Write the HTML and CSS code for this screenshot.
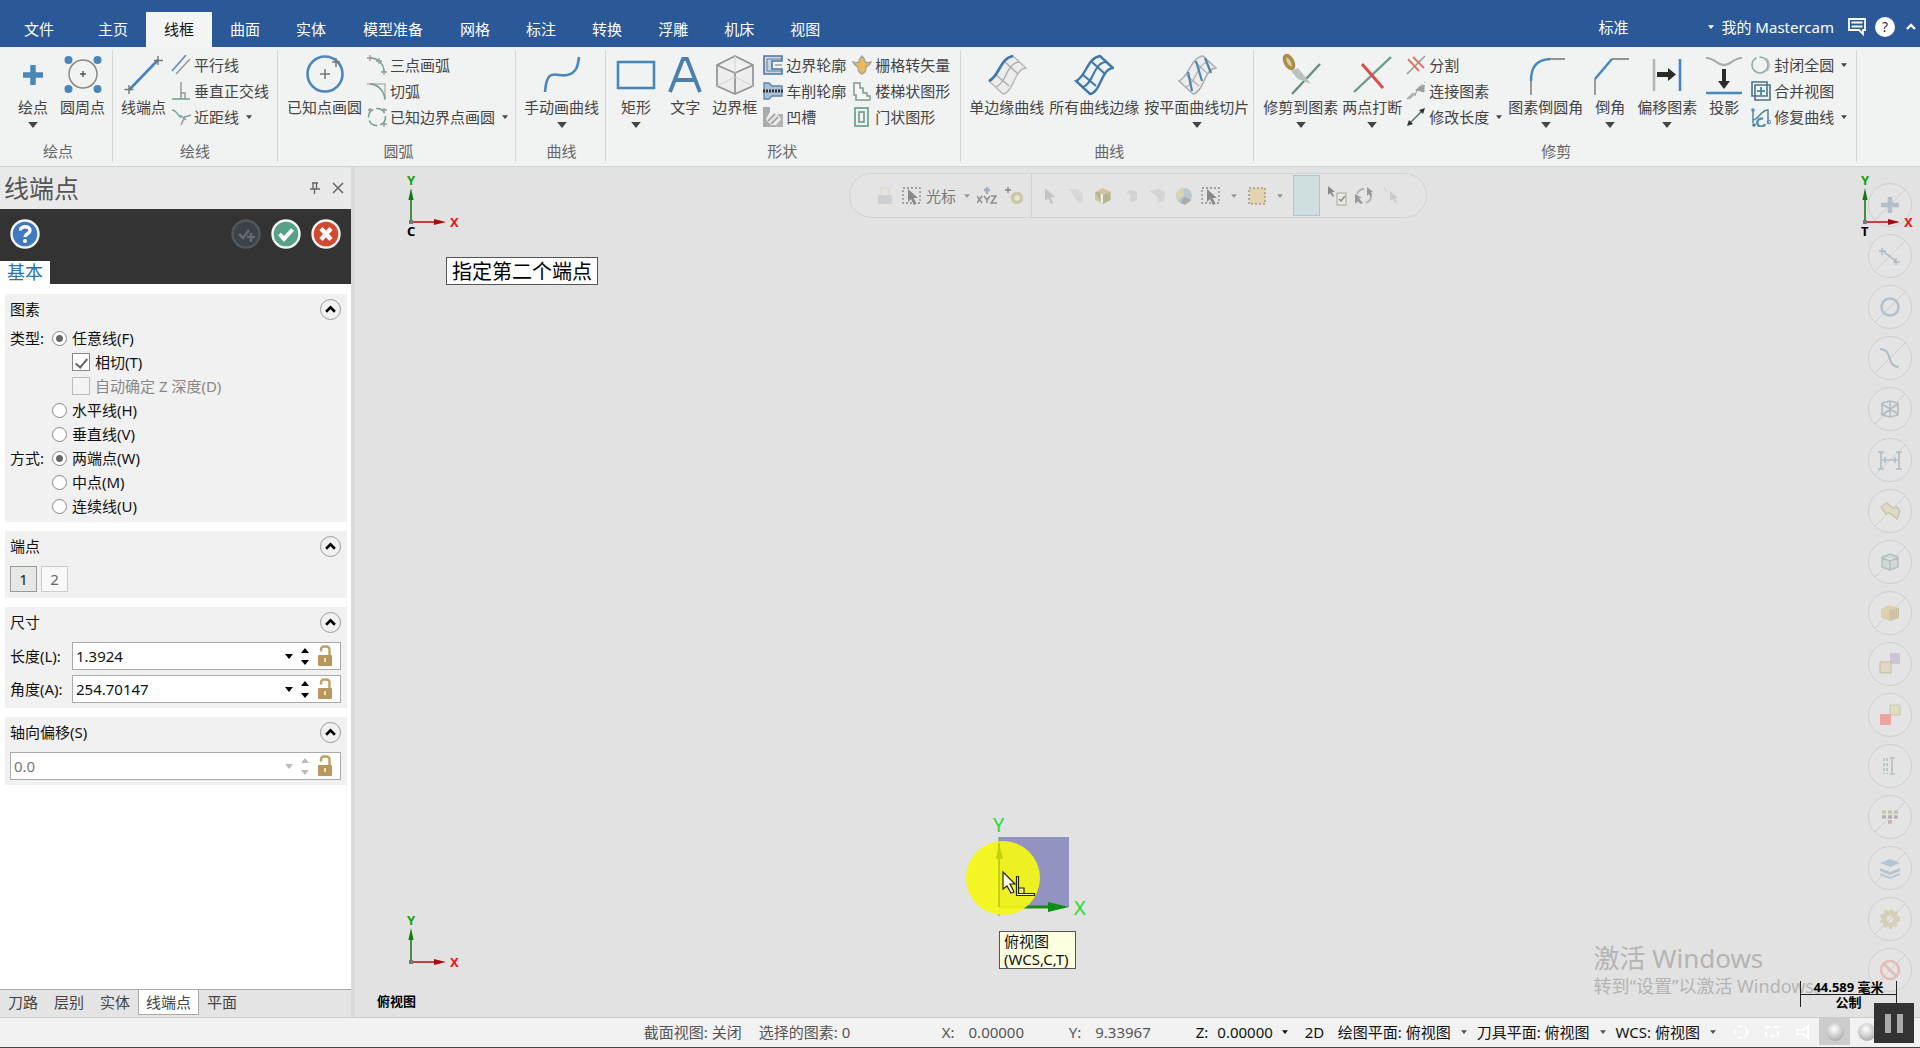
FILE: index.html
```html
<!DOCTYPE html>
<html lang="zh-CN">
<head>
<meta charset="utf-8">
<title>Mastercam</title>
<link rel="stylesheet" href="styles.css">
</head>
<body>
<svg class="defs" aria-hidden="true">
  <symbol id="down" viewBox="0 0 8 5"><path d="M0 0h8L4 5z" fill="currentColor"/></symbol>
  <symbol id="up" viewBox="0 0 8 5"><path d="M0 5h8L4 0z" fill="currentColor"/></symbol>
  <symbol id="chev" viewBox="0 0 10 8"><path d="M1 6l4-4 4 4" fill="none" stroke="currentColor" stroke-width="2.4"/></symbol>
  <symbol id="lock" viewBox="0 0 16 22"><path d="M4 6.500V4.500a3 3 0 0 1 3-3h2.500a3 3 0 0 1 3 3V10" fill="none" stroke="#bf9f61" stroke-width="2.400"/><rect x="1" y="10" width="14" height="11" rx="1" fill="#b8985a"/><path d="M8 13v4" stroke="#f3e2b8" stroke-width="2"/></symbol>
  <symbol id="boxcur" viewBox="0 0 20 20"><rect x="1" y="2" width="17" height="15" fill="none" stroke="#888" stroke-width="1.300" stroke-dasharray="2 2"/><path d="M6 3v13l3-3 3 6 2.500-1.200-3-5.800H16z" fill="#888"/></symbol>
  <symbol id="gnomon" viewBox="0 0 60 60"><path d="M11 50V24" stroke="#1c7a1c" stroke-width="1.600"/><path d="M11 15l-2.600 12h5.200z" fill="#127a12"/><path d="M11 49h24" stroke="#c01818" stroke-width="1.600"/><path d="M46 49l-12-3v6z" fill="#a80c0c"/><rect x="9" y="47" width="4" height="4" fill="#777"/></symbol>
</svg>

<header class="titlebar">
  <nav class="tabs">
    <button class="tab file">文件</button><button class="tab">主页</button><button class="tab on">线框</button><button class="tab">曲面</button><button class="tab">实体</button><button class="tab wide">模型准备</button><button class="tab">网格</button><button class="tab">标注</button><button class="tab">转换</button><button class="tab">浮雕</button><button class="tab">机床</button><button class="tab">视图</button>
  </nav>
  <div class="account">
    <button class="mode"><span>标准</span><svg class="tiny"><use href="#down"/></svg></button>
    <a class="my" href="#">我的 Mastercam</a>
    <button aria-label="消息"><svg width="18" height="20" viewBox="0 0 18 20"><path d="M1 2h16v11h-2v4l-4-4H1z" fill="none" stroke="#fff" stroke-width="1.800"/><path d="M3.500 5.500h11M3.500 9.500h11" stroke="#fff" stroke-width="1.800"/></svg></button>
    <button class="q" aria-label="帮助">?</button>
    <button aria-label="折叠功能区"><svg width="10" height="8"><use href="#chev"/></svg></button>
  </div>
</header>

<section class="ribbon">
  <div class="group">
    <div class="tools">
      <button class="big short"><svg viewBox="0 0 40 44"><path d="M20 12v20M10 22h20" stroke="#4a86b8" stroke-width="5.500"/></svg>绘点<svg class="more"><use href="#down"/></svg></button>
      <button class="big"><svg viewBox="0 0 40 44"><circle cx="20" cy="21" r="14" fill="none" stroke="#8a8a84" stroke-width="1.500"/><g fill="#4a86b8"><circle cx="5.500" cy="7" r="4"/><circle cx="34.500" cy="7" r="4"/><circle cx="5.500" cy="36" r="4"/><circle cx="34.500" cy="36" r="4"/></g><path d="M20 18v6M17 21h6" stroke="#555" stroke-width="1.400"/></svg>圆周点</button>
    </div>
    <h2>绘点</h2>
  </div>
  <div class="group g-line">
    <div class="tools">
      <button class="big"><svg viewBox="0 0 40 44"><path d="M5 37L34 7" stroke="#4584bd" stroke-width="2.600"/><path d="M5 32v9M0.500 36.500h9M34 3v9M30 7.500h9" stroke="#777" stroke-width="1.400"/></svg>线端点</button>
      <div class="col">
        <button><svg viewBox="0 0 20 20"><path d="M1 16L15 0" stroke="#5b8fc0" stroke-width="1.600"/><path d="M5 19L19 4" stroke="#999" stroke-width="1.600"/></svg>平行线</button>
        <button><svg viewBox="0 0 20 20"><path d="M10 1v17M10 12h4v6" stroke="#999" stroke-width="1.500" fill="none"/><path d="M1 18h18" stroke="#6aa08e" stroke-width="1.500"/></svg>垂直正交线</button>
        <button><svg viewBox="0 0 20 20"><path d="M1 3c4 0 6 5 9 8" stroke="#74a898" stroke-width="1.500" fill="none"/><path d="M10 18L14 9M14 10l6-2M9 8l6 5" stroke="#8aa0ac" stroke-width="1.600" fill="none"/></svg>近距线<svg class="tiny"><use href="#down"/></svg></button>
      </div>
    </div>
    <h2>绘线</h2>
  </div>
  <div class="group g-arc">
    <div class="tools">
      <button class="big"><svg viewBox="0 0 40 44"><circle cx="20" cy="21" r="17.500" fill="none" stroke="#4a86bd" stroke-width="2.600"/><path d="M20 16v10M15 21h10M31 5v9M27 9h8" stroke="#777" stroke-width="1.500"/></svg>已知点画圆</button>
      <div class="col">
        <button><svg viewBox="0 0 20 20"><path d="M3 3c8 0 14 6 14 14" stroke="#6aa08e" stroke-width="1.300" fill="none"/><path d="M3 0v6M0 3h6M12 3v6M9 6h6M17 14v6M14 17h6" stroke="#999" stroke-width="1.300"/></svg>三点画弧</button>
        <button><svg viewBox="0 0 20 20"><path d="M0 3h18v16" stroke="#b5b5b5" stroke-width="1.400" fill="none"/><path d="M3 3c8 0 14 7 15 15" stroke="#7da398" stroke-width="1.800" fill="none"/></svg>切弧</button>
        <button><svg viewBox="0 0 20 20"><circle cx="10" cy="10" r="8.500" fill="none" stroke="#6aa08e" stroke-width="1.500" stroke-dasharray="10 3"/><path d="M3 1v5M1 3h5M17 1v5M14 3h6M17 15v5M14 17h6" stroke="#999" stroke-width="1.400"/></svg>已知边界点画圆<svg class="tiny"><use href="#down"/></svg></button>
      </div>
    </div>
    <h2>圆弧</h2>
  </div>
  <div class="group g-curve">
    <div class="tools">
      <button class="big"><svg viewBox="0 0 40 44"><path d="M3 39C5 12 16 25 25 22C35 20 36 12 37 4" stroke="#4a86bd" stroke-width="2.600" fill="none"/></svg>手动画曲线<svg class="more"><use href="#down"/></svg></button>
    </div>
    <h2>曲线</h2>
  </div>
  <div class="group g-shape">
    <div class="tools">
      <button class="big short"><svg viewBox="0 0 40 44"><rect x="2" y="9" width="36" height="26" fill="none" stroke="#4a86b4" stroke-width="2.600"/></svg>矩形<svg class="more"><use href="#down"/></svg></button>
      <button class="big short"><svg viewBox="0 0 40 44"><path d="M5 39L18 6h4l13 33M10 27h20" fill="none" stroke="#4a7fae" stroke-width="3.800"/></svg>文字</button>
      <button class="big"><svg viewBox="0 0 40 44"><path d="M20 3l18 9v21L20 41 2 33V12zM2 12l18 8 18-8M20 20v21" fill="#ededed" stroke="#929292" stroke-width="1.700" stroke-linejoin="round"/><path d="M2 33l18-9 18 9M20 3v17" fill="none" stroke="#d0d0d0"/></svg>边界框</button>
      <div class="col">
        <button><svg viewBox="0 0 20 20"><path d="M1 1h18v5H9v8h10v5H1z" fill="#c6d6e6" stroke="#4a78a4" stroke-width="1.600"/><path d="M19 10H12M4 4h15M4 4v12h15" stroke="#777" fill="none"/></svg>边界轮廓</button>
        <button><svg viewBox="0 0 20 20"><path d="M1 2h5l3 3h10v10H9l-3 3H1z" fill="#a9c0d5" stroke="#5a86ae" stroke-width="1.300"/><path d="M0 10h20" stroke="#333" stroke-width="3" stroke-dasharray="2 1"/></svg>车削轮廓</button>
        <button><svg viewBox="0 0 20 20"><path d="M0 0h7v5L3 12l5 6h12v2H0z" fill="#aaa"/><path d="M14 7h6v13h-9l7-8z" fill="#b4b4b4"/><path d="M3 13l8-8 6 6-8 8z" fill="#e4e4e4"/><path d="M5 14l7-7M8 17l7-7" stroke="#999" stroke-width="1.500"/></svg>凹槽</button>
      </div>
      <div class="col">
        <button><svg viewBox="0 0 20 20"><path d="M10 1c1 1 3 3 3 6 2 1 3 1 6 0-1 3-3 4-5 5 0 4-1 6-4 7-3-1-4-3-4-7-2-1-4-2-5-5 3 1 4 1 6 0 0-3 2-5 3-6z" fill="#ebb95a" stroke="#a3a49c" stroke-width="1.400"/></svg>栅格转矢量</button>
        <button><svg viewBox="0 0 20 20"><path d="M2 2h6v5h3v5h4v3h3v4H4v-5H2z" fill="#f6f6f6" stroke="#7d9990" stroke-width="1.500"/></svg>楼梯状图形</button>
        <button><svg viewBox="0 0 20 20"><rect x="3" y="1" width="13" height="18" fill="none" stroke="#6d9e8c" stroke-width="1.700"/><rect x="7" y="5" width="5" height="10" fill="none" stroke="#6d9e8c" stroke-width="1.700"/></svg>门状图形</button>
      </div>
    </div>
    <h2>形状</h2>
  </div>
  <div class="group g-edge">
    <div class="tools">
      <button class="big"><svg viewBox="0 0 40 44"><path d="M2 28C12 24 13 5 26 3L39 15C27 16 27 39 16 41z" fill="#ececec" stroke="#b8b8b8" stroke-width="1.500"/><path d="M9 34C20 30 19 10 32 9M8 21l14 12M18 9l13 12" fill="none" stroke="#aaa" stroke-width="1.300"/><path d="M2 28C12 24 13 5 26 3" fill="none" stroke="#3f77ad" stroke-width="2.600"/></svg>单边缘曲线</button>
      <button class="big"><svg viewBox="0 0 40 44"><path d="M2 28C12 24 13 5 26 3L39 15C27 16 27 39 16 41z" fill="#edf2f5" stroke="#3f77a8" stroke-width="2.400"/><path d="M9 34C20 30 19 10 32 9M8 21l14 12M18 9l13 12" fill="none" stroke="#3f77a8" stroke-width="2"/></svg>所有曲线边缘</button>
      <button class="big"><svg viewBox="0 0 40 44"><path d="M2 28C12 24 13 5 26 3L39 15C27 16 27 39 16 41z" fill="#ececec" stroke="#aaa" stroke-width="1.500"/><path d="M9 34C20 30 19 10 32 9M8 21l14 12M18 9l13 12" fill="none" stroke="#b0b0b0" stroke-width="1.200"/><path d="M15 38L11 19M25 28L19 8M34 20L28 5" stroke="#4a86ae" stroke-width="2.200"/></svg>按平面曲线切片<svg class="more"><use href="#down"/></svg></button>
    </div>
    <h2>曲线</h2>
  </div>
  <div class="group g-trim">
    <div class="tools">
      <button class="big"><svg viewBox="0 0 40 44"><path d="M11 41L39 11" stroke="#659079" stroke-width="2.400"/><ellipse cx="8" cy="9" rx="3.500" ry="7" transform="rotate(-28 8 9)" fill="#d9cfae" stroke="#a98d48" stroke-width="3.600"/><path d="M10 18l7-3 13 16-13-5z" fill="#b9c2be"/></svg>修剪到图素<svg class="more"><use href="#down"/></svg></button>
      <button class="big"><svg viewBox="0 0 40 44"><path d="M2 39L39 4" stroke="#699c86" stroke-width="2.400"/><path d="M10 11l21 24" stroke="#dd4c49" stroke-width="3"/></svg>两点打断<svg class="more"><use href="#down"/></svg></button>
      <div class="col">
        <button><svg viewBox="0 0 20 20"><path d="M1 19L19 1" stroke="#8d9994" stroke-width="1.400"/><path d="M2 4l11 12M7 2l11 11" stroke="#dc7668" stroke-width="1.900"/></svg>分割</button>
        <button><svg viewBox="0 0 20 20"><path d="M1 18L19 1M3 18L19 4" stroke="#a8aaa9" stroke-width="1.300" stroke-dasharray="9 3"/><path d="M18 4v7l-7-2zM9 15l2-6" fill="#9a9f9c" stroke="#9a9f9c"/></svg>连接图素</button>
        <button><svg viewBox="0 0 20 20"><path d="M3 17L17 3" stroke="#477f70" stroke-width="1.600"/><path d="M19 1l-6 2 4 4zM1 19l2-6 4 4z" fill="#333"/></svg>修改长度<svg class="tiny"><use href="#down"/></svg></button>
      </div>
      <button class="big"><svg viewBox="0 0 40 44"><path d="M5 42V28M22 6h17" stroke="#929292" stroke-width="1.800"/><path d="M5 28C5 14 10 7 24 6" fill="none" stroke="#4686be" stroke-width="2.400"/></svg>图素倒圆角<svg class="more"><use href="#down"/></svg></button>
      <button class="big short"><svg viewBox="0 0 40 44"><path d="M5 42V26M22 6h17" stroke="#929292" stroke-width="1.800"/><path d="M5 26L22 6" stroke="#4686be" stroke-width="2.400"/></svg>倒角<svg class="more"><use href="#down"/></svg></button>
      <button class="big"><svg viewBox="0 0 40 44"><path d="M7 6v32" stroke="#b5b5b5" stroke-width="2.600"/><path d="M33 6v32" stroke="#4686be" stroke-width="2.600"/><path d="M10 19h11v-4l8 6.500-8 6.500v-4H10z" fill="#2b2b2b"/></svg>偏移图素<svg class="more"><use href="#down"/></svg></button>
      <button class="big short"><svg viewBox="0 0 40 44"><path d="M2 5c9 0 11 7 18 7s9-7 18-7" fill="none" stroke="#aaa" stroke-width="2"/><path d="M18 16h4v12h4l-6 8-6-8h4z" fill="#2b2b2b"/><path d="M2 40h36" stroke="#4a88bd" stroke-width="2.600"/></svg>投影</button>
      <div class="col">
        <button><svg viewBox="0 0 20 20"><circle cx="9" cy="10" r="8" fill="none" stroke="#8cafa3" stroke-width="1.600" stroke-dasharray="34 3"/><path d="M15 3c4 4 4 10 1 13" fill="none" stroke="#b5b5b5" stroke-width="1.500"/></svg>封闭全圆<svg class="tiny"><use href="#down"/></svg></button>
        <button><svg viewBox="0 0 20 20"><path d="M1 1h15v14H1zM4 4h15v15H4z" fill="none" stroke="#4c7484" stroke-width="1.600"/><path d="M10 6v8M6 10h8" stroke="#4b90b8" stroke-width="2"/></svg>合并视图</button>
        <button><svg viewBox="0 0 20 20"><path d="M2 2v14M2 13C8 12 10 3 17 3v14" fill="none" stroke="#4d8896" stroke-width="1.500"/><circle cx="2" cy="3" r="1.800" fill="#4b90b8"/><circle cx="18" cy="15" r="1.800" fill="none" stroke="#4b90b8"/><path d="M12 12a4 4 0 1 0 2 5" fill="none" stroke="#5593b3" stroke-width="2.500"/><circle cx="3" cy="18" r="1.800" fill="#3d7c9c"/></svg>修复曲线<svg class="tiny"><use href="#down"/></svg></button>
      </div>
    </div>
    <h2>修剪</h2>
  </div>
</section>

<main class="work">
  <aside class="panel">
    <div class="head">
      <h1>线端点</h1>
      <button aria-label="固定"><svg width="12" height="12" viewBox="0 0 12 12"><path d="M3 1h6M4 1v6M7.500 1v6M1 7h10M5.500 7v5" stroke="#666" stroke-width="1.400"/></svg></button>
      <button aria-label="关闭"><svg width="12" height="12" viewBox="0 0 12 12"><path d="M1 1l10 10M11 1L1 11" stroke="#666" stroke-width="1.500"/></svg></button>
    </div>
    <div class="dark">
      <div class="acts">
        <button aria-label="帮助" class="first"><svg viewBox="0 0 30 30"><circle cx="15" cy="15" r="13.500" fill="#4179bf" stroke="#f2f6fa" stroke-width="2.400"/><path d="M10.500 11.500c0-5 9.500-5 9.500 0 0 3.500-5 3-5 6.500" fill="none" stroke="#fff" stroke-width="3.400"/><circle cx="15" cy="22" r="2" fill="#fff"/></svg></button>
        <button aria-label="确定并新建"><svg viewBox="0 0 30 30"><circle cx="15" cy="15" r="13.500" fill="#3c4348" stroke="#51585c" stroke-width="2.400"/><path d="M8 15l4 4 6-8M20 14v9M16 18h8" fill="none" stroke="#626b70" stroke-width="2.500"/></svg></button>
        <button aria-label="确定"><svg viewBox="0 0 30 30"><circle cx="15" cy="15" r="13.500" fill="#58a189" stroke="#f2f6f4" stroke-width="2.400"/><path d="M8.500 15l4.500 5 8.500-9.500" fill="none" stroke="#fff" stroke-width="4"/></svg></button>
        <button aria-label="取消"><svg viewBox="0 0 30 30"><circle cx="15" cy="15" r="13.500" fill="#d1492f" stroke="#f8f0ee" stroke-width="2.400"/><path d="M10 9.500l10 11M20 9.500l-10 11" stroke="#fff" stroke-width="4.500"/></svg></button>
      </div>
      <button class="basic">基本</button>
    </div>
    <div class="cards">
      <section class="card entity">
        <div class="cap"><h3>图素</h3><button class="fold" aria-label="折叠"><svg><use href="#chev"/></svg></button></div>
        <div class="opts">
          <div class="row"><span class="lead">类型:</span><label><input type="radio" name="type" checked>任意线(F)</label></div>
          <div class="row sub"><label><input type="checkbox" checked>相切(T)</label></div>
          <div class="row sub"><label class="off"><input type="checkbox" disabled>自动确定 Z 深度(D)</label></div>
          <div class="row"><span class="lead"></span><label><input type="radio" name="type">水平线(H)</label></div>
          <div class="row"><span class="lead"></span><label><input type="radio" name="type">垂直线(V)</label></div>
          <div class="row"><span class="lead">方式:</span><label><input type="radio" name="way" checked>两端点(W)</label></div>
          <div class="row"><span class="lead"></span><label><input type="radio" name="way">中点(M)</label></div>
          <div class="row"><span class="lead"></span><label><input type="radio" name="way">连续线(U)</label></div>
        </div>
      </section>
      <section class="card">
        <div class="cap"><h3>端点</h3><button class="fold" aria-label="折叠"><svg><use href="#chev"/></svg></button></div>
        <div class="pts"><button class="pt on">1</button><button class="pt">2</button></div>
      </section>
      <section class="card">
        <div class="cap"><h3>尺寸</h3><button class="fold" aria-label="折叠"><svg><use href="#chev"/></svg></button></div>
        <div class="line"><label for="len">长度(L):</label><div class="field"><input id="len" value="1.3924"><button aria-label="列表"><svg class="arr"><use href="#down"/></svg></button><span class="spin"><button aria-label="增加"><svg class="arr"><use href="#up"/></svg></button><button aria-label="减少"><svg class="arr"><use href="#down"/></svg></button></span><button aria-label="锁定"><svg class="lk"><use href="#lock"/></svg></button></div></div>
        <div class="line"><label for="ang">角度(A):</label><div class="field"><input id="ang" value="254.70147"><button aria-label="列表"><svg class="arr"><use href="#down"/></svg></button><span class="spin"><button aria-label="增加"><svg class="arr"><use href="#up"/></svg></button><button aria-label="减少"><svg class="arr"><use href="#down"/></svg></button></span><button aria-label="锁定"><svg class="lk"><use href="#lock"/></svg></button></div></div>
      </section>
      <section class="card">
        <div class="cap"><h3><label for="off">轴向偏移(S)</label></h3><button class="fold" aria-label="折叠"><svg><use href="#chev"/></svg></button></div>
        <div class="line"><div class="field dim"><input id="off" value="0.0" disabled><button aria-label="列表"><svg class="arr"><use href="#down"/></svg></button><span class="spin"><button aria-label="增加"><svg class="arr"><use href="#up"/></svg></button><button aria-label="减少"><svg class="arr"><use href="#down"/></svg></button></span><button aria-label="锁定"><svg class="lk"><use href="#lock"/></svg></button></div></div>
      </section>
    </div>
    <nav class="dock"><button>刀路</button><button>层别</button><button>实体</button><button class="on">线端点</button><button>平面</button></nav>
  </aside>

  <div class="stage">
    <div class="gn top-left"><svg><use href="#gnomon"/></svg><b class="y">Y</b><b class="x">X</b><b class="n">C</b></div>
    <div class="gn bottom-left"><svg><use href="#gnomon"/></svg><b class="y">Y</b><b class="x">X</b></div>
    <div class="prompt">指定第二个端点</div>
    <b class="view">俯视图</b>

    <div class="selbar">
      <button class="lockb" aria-label="锁定"><svg viewBox="0 0 20 20"><path d="M6 9V2h8v7" fill="none" stroke="#e2ddd0" stroke-width="2"/><rect x="3" y="9" width="14" height="9" fill="#cdcfd1"/></svg></button>
      <button class="cur"><svg viewBox="0 0 20 20"><use href="#boxcur"/></svg>光标<svg class="tiny"><use href="#down"/></svg></button>
      <button aria-label="坐标"><svg viewBox="0 0 20 20"><path d="M10 1v7M7 4h6" stroke="#9db0c0" stroke-width="2.400"/><path d="M0 10l5 7M5 10l-5 7M7 10l3 4 3-4M10 14v3M14 10h5l-5 7h6" fill="none" stroke="#8e8e8e" stroke-width="1.500"/></svg></button>
      <button aria-label="设置"><svg viewBox="0 0 20 20"><path d="M4 1v6M1 4h6" stroke="#888" stroke-width="1.500"/><circle cx="13" cy="12" r="4.500" fill="none" stroke="#ccc9a0" stroke-width="3.500"/></svg></button>
      <i class="sep"></i>
      <button aria-label="选择"><svg viewBox="0 0 20 20"><path d="M6 2v13l3-3 3 6 2.500-1.200-3-5.800H16z" fill="#c3c5c5"/></svg></button>
      <button aria-label="窗选"><svg viewBox="0 0 20 20"><path d="M3 3h9l5 5v9h-5L7 9z" fill="#d6d8d8"/></svg></button>
      <button aria-label="实体"><svg viewBox="0 0 20 20"><path d="M2 6l8-4 8 4v8l-8 4-8-4z" fill="#cdc8a2"/><path d="M10 9v9l7-4V6zM2 6h5v8z" fill="#b3b694"/><path d="M9 8v9" stroke="#eee" stroke-width="2"/></svg></button>
      <button aria-label="面"><svg viewBox="0 0 20 20"><path d="M6 6l5-2 6 2v8l-6 3-1-8z" fill="#d2d4d4"/></svg></button>
      <button aria-label="体"><svg viewBox="0 0 20 20"><path d="M2 5l9-2 7 3-1 9-6 2-1-7z" fill="#d3d5d5"/></svg></button>
      <button aria-label="颜色"><svg viewBox="0 0 20 20"><circle cx="10" cy="10" r="8" fill="#b9c9d2"/><path d="M10 10V2a8 8 0 0 0-7 12z" fill="#d8d3b4"/><path d="M10 10l7 4-6 5-4-2z" fill="#a9adad"/></svg></button>
      <button class="dd" aria-label="选择方式"><svg viewBox="0 0 20 20"><use href="#boxcur"/></svg><svg class="tiny"><use href="#down"/></svg></button>
      <button class="dd" aria-label="区域"><svg viewBox="0 0 20 20"><rect x="2" y="2" width="16" height="16" fill="#e4d3b1" stroke="#a39c90" stroke-width="1.600" stroke-dasharray="2 2"/></svg><svg class="tiny"><use href="#down"/></svg></button>
      <button class="hot" aria-label="验证"></button>
      <button aria-label="确认选择"><svg viewBox="0 0 20 20"><path d="M1 0v9l2-2 3 4 1-1-2-4h3z" fill="#888"/><rect x="10" y="7" width="9" height="12" fill="#eaeae4" stroke="#aaa794"/><path d="M12 13l2 2 4-5" fill="none" stroke="#888" stroke-width="1.500"/></svg></button>
      <button aria-label="反选"><svg viewBox="0 0 20 20"><circle cx="10" cy="10" r="7" fill="none" stroke="#afb4af" stroke-width="2" stroke-dasharray="9 3"/><path d="M1 8v10l3-3 3 3 1-2-3-4h3zM13 1v9l2-2 2 3 1-1-1-4h2z" fill="#999"/></svg></button>
      <button aria-label="上次"><svg viewBox="0 0 20 20"><path d="M9 5v10l3-2 2 4 2-1-2-4h3z" fill="#cacccc"/><path d="M3 2l3 4" stroke="#d6d6d6" stroke-width="2"/></svg></button>
    </div>

    <div class="quick">
      <button aria-label="点"><svg viewBox="0 0 44 44"><path d="M22 14v16M13 22h18" stroke="#a9bac7" stroke-width="4.500"/></svg></button>
      <button aria-label="线"><svg viewBox="0 0 44 44"><path d="M15 17l14 11M14 14v7M11 17h7M28 24v7M25 28h7" stroke="#a9b3b9" stroke-width="1.500"/></svg></button>
      <button aria-label="圆"><svg viewBox="0 0 44 44"><circle cx="22" cy="22" r="8.500" fill="none" stroke="#a9bac7" stroke-width="2.500"/></svg></button>
      <button aria-label="曲线"><svg viewBox="0 0 44 44"><path d="M12 13c14 1 5 17 19 18" fill="none" stroke="#a9b9c3" stroke-width="2.200"/></svg></button>
      <button aria-label="网格"><svg viewBox="0 0 44 44"><path d="M14 16l8-2 8 2v12l-8 2-8-2zM14 17l16 10M30 17L14 28M22 15v14" fill="none" stroke="#a9b5bd" stroke-width="1.600"/></svg></button>
      <button aria-label="标注"><svg viewBox="0 0 44 44"><path d="M13 14v17M31 14v17M13 22h18M10 14h6M28 14h6M10 31h6M28 31h6M17 19v6M27 19v6" fill="none" stroke="#a9b8c1" stroke-width="1.700"/></svg></button>
      <button aria-label="曲面"><svg viewBox="0 0 44 44"><path d="M13 18l6-4 6 5 4-1 3 4-3 8-7-6-4 1z" fill="#dcd8bd" stroke="#c5c2a5" stroke-width="1.500"/></svg></button>
      <button aria-label="网格体"><svg viewBox="0 0 44 44"><path d="M14 17l8-3 8 3v10l-8 3-8-3zM14 18l8 3 8-3M22 21v9" fill="#cfd6d6" stroke="#adb9ba" stroke-width="1.500"/></svg></button>
      <button aria-label="实体"><svg viewBox="0 0 44 44"><path d="M13 18l8-4 10 3v10l-9 3-9-3z" fill="#dccfa8"/><path d="M21 19l10-2v10l-9 3z" fill="#c8bf9c"/></svg></button>
      <button class="plain" aria-label="群组"><svg viewBox="0 0 44 44"><path d="M22 11h10v11H22z" fill="#c9c0d4"/><path d="M12 20h11v11H12z" fill="#e0d6bd" stroke="#bdb59e"/></svg></button>
      <button class="plain" aria-label="结果"><svg viewBox="0 0 44 44"><path d="M22 12h10v10H22z" fill="#dddcb9" stroke="#c5c3a2"/><path d="M12 21h11v11H12z" fill="#ee9a98"/></svg></button>
      <button class="plain" aria-label="着色"><svg viewBox="0 0 44 44"><path d="M16 14v16M19 14v16" stroke="#b4c0c3" stroke-width="2" stroke-dasharray="3 2"/><path d="M24 14v16M22 14h5M22 30h5" stroke="#a9b9bd" stroke-width="1.500"/></svg></button>
      <button aria-label="颜色"><svg viewBox="0 0 44 44"><path d="M14 17h16" stroke="#c3c3a6" stroke-width="3.500" stroke-dasharray="4 2"/><path d="M14 22h16" stroke="#aaa7ae" stroke-width="3.500" stroke-dasharray="4 2"/><path d="M20 27h4" stroke="#bda9a8" stroke-width="3.500"/></svg></button>
      <button aria-label="层别"><svg viewBox="0 0 44 44"><path d="M12 17l10-4 10 4-10 4zM12 22l10 4 10-4v3l-10 4-10-4zM12 27l10 4 10-4v2l-10 4-10-4z" fill="#afc0d2"/></svg></button>
      <button aria-label="选项"><svg viewBox="0 0 44 44"><circle cx="22" cy="22" r="6" fill="none" stroke="#d3cdb0" stroke-width="5"/><circle cx="22" cy="22" r="9" fill="none" stroke="#d3cdb0" stroke-width="2" stroke-dasharray="3 3"/></svg></button>
      <button aria-label="清除"><svg viewBox="0 0 44 44"><circle cx="22" cy="22" r="9" fill="none" stroke="#e3b4b0" stroke-width="2.500"/><path d="M16 16l12 12" stroke="#e3b4b0" stroke-width="2.500"/></svg></button>
    </div>
    <div class="gn top-right"><svg><use href="#gnomon"/></svg><b class="y">Y</b><b class="x">X</b><b class="n">T</b></div>

    <div class="origin">
      <svg viewBox="0 0 130 130"><rect x="39" y="27" width="70" height="70" fill="#9293c1"/><path d="M39 27v79" stroke="#6e9b63"/><path d="M39 97h54" stroke="#1a8c1a" stroke-width="3"/><path d="M109 97l-21-5v10z" fill="#0d8e14"/><circle cx="43" cy="68" r="37" fill="#f4f714" fill-opacity=".93"/><path d="M39 33v64" stroke="#b9c30c" stroke-width="1.500"/><path d="M39 33l-3 16h7z" fill="#c4d208"/><path d="M43 62v17l4-3 4 7 3-1-4-8h5z" fill="#fffde8" stroke="#26261a" stroke-width="1.200"/><path d="M56.500 66.500v19h18v-2h-16v-17zM59 78h5v5" fill="#f5f5d0" stroke="#26261a" stroke-width="1.200"/></svg>
      <span class="oy">Y</span><span class="ox">X</span>
    </div>
    <div class="tip">俯视图<br>(WCS,C,T)</div>
    <div class="mark"><p>激活 Windows</p><p class="s">转到“设置”以激活 Windows。</p></div>
    <div class="scale"><b>44.589 毫米</b><b class="u">公制</b></div>
  </div>
</main>

<footer class="status">
  <span class="st1">截面视图: 关闭</span><span class="st2">选择的图素: 0</span>
  <span class="xyz">X:<span>0.00000</span></span><span class="xyz">Y:<span>9.33967</span></span>
  <button class="xyz">Z:<span>0.00000</span><svg class="tiny"><use href="#down"/></svg></button>
  <button class="two">2D</button>
  <button class="pl">绘图平面: 俯视图<svg class="tiny"><use href="#down"/></svg></button>
  <button class="pl">刀具平面: 俯视图<svg class="tiny"><use href="#down"/></svg></button>
  <button class="pl">WCS: 俯视图<svg class="tiny"><use href="#down"/></svg></button>
  <div class="shade">
    <button aria-label="线框"><svg viewBox="0 0 20 20"><circle cx="10" cy="10" r="6" fill="none" stroke="#fff" stroke-width="2" stroke-dasharray="5 3"/></svg></button>
    <button aria-label="隐藏线"><svg viewBox="0 0 20 20"><path d="M4 5h12v9H4z" fill="none" stroke="#fff" stroke-width="2" stroke-dasharray="5 3"/></svg></button>
    <button aria-label="无隐藏线"><svg viewBox="0 0 20 20"><path d="M4 8h6l5-4v12l-5-4H4z" fill="none" stroke="#fff" stroke-width="2"/></svg></button>
    <button class="on ball" aria-label="边框着色"><i></i></button>
    <button class="ball" aria-label="着色"><i></i></button>
  </div>
  <button class="pause" aria-label="暂停"><i></i><i></i></button>
</footer>
</body>
</html>
```
FILE: styles.css
```css
* { box-sizing: border-box; }
body {
  margin: 0;
  height: 100vh;
  display: flex;
  flex-direction: column;
  overflow: hidden;
  font: 15px/20px "Noto Sans", "Noto Sans CJK SC", sans-serif;
  color: #333;
  background: #f1f1f1;
}
button {
  font: inherit;
  color: inherit;
  background: none;
  border: 0;
  padding: 0;
  margin: 0;
  white-space: nowrap;
}
h1, h2, h3, p { margin: 0; font-weight: 400; }
svg { display: block; flex: none; }
.defs { position: absolute; width: 0; height: 0; }
.tiny { width: 6px; height: 4px; }

/* title bar */
.titlebar {
  display: flex;
  justify-content: space-between;
  align-items: flex-end;
  height: 47px;
  flex: none;
  background: #2b5896;
  color: #fff;
}
.tabs { display: flex; }
.tab { height: 35px; padding: 0 18px 2px; }
.tab.file { width: 80px; text-align: left; padding-left: 24px; }
.tab.wide { padding: 0 19px 2px; }
.tab.on { background: #f3f4f4; color: #111; }
.account { display: flex; align-items: center; height: 38px; padding: 0 4px 2px 0; }
.mode { display: flex; align-items: center; gap: 80px; margin-right: 7px; }
.my { color: #fff; text-decoration: none; margin-right: 14px; }
.account .q {
  width: 20px;
  height: 20px;
  margin: 0 11px 0 9px;
  border-radius: 50%;
  background: #fff;
  color: #333;
  font-size: 14px;
}

/* ribbon */
.ribbon {
  display: flex;
  flex: none;
  background: #f1f2f2;
  border-bottom: 1px solid #d2d2d2;
  padding: 3px 0 4px;
}
.group { border-right: 1px solid #d6d6d6; padding: 2px 7px 0 11px; }
.g-line { padding: 2px 8px 0 8px; }
.g-arc { padding: 2px 5px 0 9px; }
.g-curve { padding: 2px 6px 0 8px; }
.g-shape { padding: 2px 10px 0 8px; }
.g-edge { padding: 2px 4px 0 8px; }
.g-trim { padding: 2px 7px 0 9px; }
.group h2 { font-size: 15px; text-align: center; color: #666; line-height: 18px; padding-bottom: 2px; }
.tools { display: flex; gap: 5px; height: 90px; align-items: flex-start; }
.g-trim .tools { gap: 4px; }
.g-shape .col { margin-left: 1px; }
.big {
  display: flex;
  flex-direction: column;
  align-items: center;
  padding-top: 1px;
  color: #444;
}
.big svg { width: 40px; height: 44px; margin: 0 -5px; }
.big .more { width: 10px; height: 6px; margin: 5px 0 0; }
.short { padding-left: 7px; padding-right: 7px; }
.g-trim .short { padding-left: 8px; padding-right: 8px; }
.col button { display: flex; align-items: center; gap: 3px; height: 26px; color: #444; }
.col svg { width: 20px; height: 20px; }
.col .tiny { width: 6px; height: 4px; margin: 0 2px 0 4px; }

/* side panel */
.work { display: flex; flex: 1; min-height: 0; }
.panel {
  width: 351px;
  flex: none;
  display: flex;
  flex-direction: column;
  background: #fff;
}
.head {
  display: flex;
  align-items: center;
  gap: 11px;
  height: 42px;
  padding: 0 7px 0 4px;
  background: #e9e9e9;
}
.head h1 { flex: 1; font-size: 25px; line-height: 36px; color: #555; }
.dark { background: #333; height: 75px; display: flex; flex-direction: column; justify-content: space-between; }
.acts { display: flex; gap: 10px; padding: 10px 10px 0; }
.acts .first { margin-right: auto; }
.acts svg { width: 30px; height: 30px; }
.basic { align-self: flex-start; width: 50px; height: 23px; background: #fff; color: #2a72ad; font-size: 18px; line-height: 23px; }
.cards { flex: 1; padding: 10px 4px 0 5px; color: #111; display: flex; flex-direction: column; gap: 9px; }
.card { background: #f1f1f1; padding: 4px 6px 5px 5px; }
.cap { display: flex; justify-content: space-between; align-items: center; height: 22px; }
.cap h3 { font-size: 15px; }
.fold {
  width: 21px;
  height: 21px;
  border: 1px solid #999;
  border-radius: 50%;
  display: grid;
  place-items: center;
}
.fold svg { width: 11px; height: 9px; color: #000; }
.entity { padding-bottom: 4px; }
.opts { padding-top: 6px; }
.row { display: flex; align-items: center; height: 24px; }
.row label { display: flex; align-items: center; gap: 5px; }
.row.sub { padding-left: 62px; }
.lead { width: 42px; }
.off { color: #888; }
input { margin: 0; font: inherit; color: inherit; }
input[type="radio"] {
  appearance: none;
  width: 15px;
  height: 15px;
  border: 1px solid #888;
  border-radius: 50%;
  background: #fff;
}
input[type="radio"]:checked { background: radial-gradient(circle, #666 0 3px, #fff 4px); }
input[type="checkbox"] {
  appearance: none;
  width: 18px;
  height: 18px;
  border: 1px solid #888;
  background: #fff;
  display: grid;
  place-items: center;
}
input[type="checkbox"]:checked::before {
  content: "";
  width: 5px;
  height: 10px;
  border: solid #666;
  border-width: 0 2px 2px 0;
  rotate: 40deg;
}
input[type="checkbox"]:disabled { border-color: #bbb; background: #f4f4f4; }
.pts { display: flex; gap: 4px; padding: 9px 0 1px; }
.pt { width: 27px; height: 26px; border: 1px solid #ccc; background: #f8f8f8; color: #666; }
.pt.on { border-color: #999; background: #e6e8e4; color: #222; }
.line { display: flex; align-items: center; padding-top: 9px; }
.line + .line { padding-top: 5px; }
.line > label { width: 62px; flex: none; white-space: nowrap; }
.field { flex: 1; min-width: 0; display: flex; align-items: center; height: 28px; border: 1px solid #aaa; background: #fff; padding: 0 7px 0 3px; }
.field input { flex: 1; min-width: 0; border: 0; background: none; padding: 0; }
.arr { width: 8px; height: 5px; color: #000; }
.spin { display: flex; flex-direction: column; gap: 7px; margin: 0 8px; }
.lk { width: 16px; height: 22px; }
.dim input { color: #777; }
.dim .arr { color: #bbb; }
.dock { display: flex; height: 28px; background: #e4e4e4; border-top: 1px solid #aaa; color: #444; }
.dock button { padding: 0 8px 2px; height: 25px; }
.dock .on { background: #fff; border: solid #aaa; border-width: 0 1px 1px; padding: 0 7px 1px; }

/* graphics window */
.stage {
  position: relative;
  flex: 1;
  background: #e2e2e2;
  border-left: 4px solid #dadada;
  overflow: hidden;
}
.gn { position: absolute; width: 70px; height: 76px; }
.gn svg { width: 60px; height: 60px; margin-top: 6px; }
.gn b { position: absolute; font: bold 13px/14px "Noto Sans", sans-serif; }
.gn .y { left: 7px; top: 6px; color: #12a012; }
.gn .x { left: 50px; top: 48px; color: #ee1520; }
.gn .n { left: 7px; top: 57px; color: #000; }
.top-left { left: 45px; top: 0; }
.bottom-left { left: 45px; bottom: 34px; }
.top-right { right: -4px; top: 0; }
.prompt {
  position: absolute;
  left: 91px;
  top: 90px;
  padding: 0 5px;
  border: 1px solid #555;
  background: #fff;
  color: #000;
  font: 20px/26px "Noto Sans CJK SC", sans-serif;
}
.view { position: absolute; left: 22px; bottom: 6px; font-size: 13px; color: #000; }
.selbar {
  position: absolute;
  left: 494px;
  top: 6px;
  height: 45px;
  display: flex;
  align-items: center;
  gap: 7px;
  padding: 0 25px;
  border: 1px solid #d2d2d2;
  border-radius: 23px;
  background: #e4e4e4;
  color: #777;
}
.selbar svg { width: 20px; height: 20px; }
.selbar .tiny { width: 6px; height: 4px; color: #999; }
.cur, .dd { display: flex; align-items: center; gap: 4px; }
.selbar .cur .tiny { margin-left: 4px; }
.selbar .dd .tiny { margin: 0 3px 0 6px; }
.sep { width: 1px; height: 43px; background: #d0d0d0; }
.hot { width: 27px; height: 41px; background: #cfdee1; border: 1px solid #adc4d3; }
.quick { position: absolute; right: 8px; top: 16px; display: flex; flex-direction: column; gap: 7px; }
.quick button {
  width: 44px;
  height: 44px;
  border: 1px solid #cfcfcf;
  border-radius: 50%;
  background: linear-gradient(135deg, transparent 49%, #cdcdcd 49% 51%, transparent 51%) #e4e4e4;
}
.quick .plain { background: #e4e4e4; }
.quick svg { width: 44px; height: 44px; margin: -1px; opacity: .85; }
.origin { position: absolute; left: 605px; top: 643px; }
.origin svg { width: 130px; height: 130px; }
.origin span { position: absolute; font-size: 20px; color: #22dd35; }
.oy { left: 33px; top: 5px; }
.ox { left: 114px; top: 88px; }
.tip {
  position: absolute;
  left: 644px;
  top: 764px;
  border: 1px solid #555;
  background: #ffffe1;
  color: #111;
  padding: 0 6px 0 4px;
  line-height: 18px;
}
.mark { position: absolute; right: 88px; bottom: 20px; color: #b4b4b4; }
.mark p { font-size: 26px; line-height: 34px; }
.mark .s { font-size: 18px; line-height: 22px; }
.scale {
  position: absolute;
  right: 23px;
  bottom: 10px;
  width: 97px;
  height: 26px;
  border: solid #222;
  border-width: 0 1px;
  color: #000;
  font-size: 13px;
  line-height: 13px;
  text-align: center;
  background: linear-gradient(#222, #222) 0 13px / 100% 1px no-repeat;
}
.scale b { display: block; }
.scale .u { padding-top: 2px; }

/* status bar */
.status {
  display: flex;
  align-items: center;
  flex: none;
  height: 31px;
  padding: 0 38px 2px 0;
  border-top: 1px solid #ccc;
  border-bottom: 1px solid #444;
  background: #f2f2f2;
  color: #555;
  position: relative;
}
.status > * { display: flex; align-items: center; flex: none; }
.status > button { color: #111; }
.st1 { margin-left: auto; width: 115px; }
.st2 { width: 183px; }
.xyz { width: 127px; gap: 14px; }
.status button.xyz { width: 109px; gap: 9px; }
.two { width: 33px; }
.pl { gap: 10px; margin-right: 10px; }
.pl .tiny { color: #555; }
.shade { gap: 1px; }
.shade svg { width: 30px; height: 20px; }
.shade button { display: grid; place-items: center; height: 27px; }
.ball { width: 31px; }
.ball i { width: 18px; height: 18px; border-radius: 50%; background: radial-gradient(circle at 45% 35%, #fff, #aaa 80%); }
.shade .on { background: #ccc; }
.status .pause {
  position: absolute;
  right: 6px;
  bottom: 4px;
  width: 40px;
  height: 40px;
  justify-content: center;
  gap: 6px;
  background: #333;
}
.pause i { width: 6px; height: 19px; background: #aaa; }
```
